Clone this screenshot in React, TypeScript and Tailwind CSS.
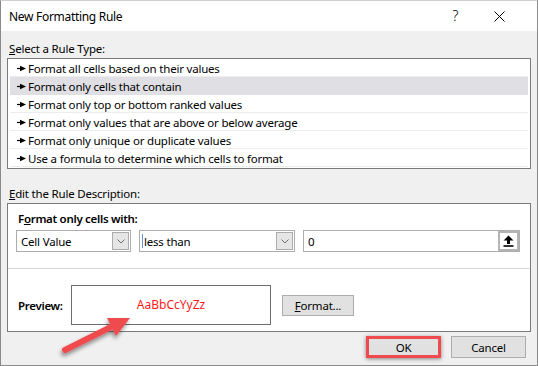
import React from "react";

const rules = [
  "Format all cells based on their values",
  "Format only cells that contain",
  "Format only top or bottom ranked values",
  "Format only values that are above or below average",
  "Format only unique or duplicate values",
  "Use a formula to determine which cells to format",
];

function Bullet() {
  return (
    <svg width="9" height="7" viewBox="0 0 9 7" className="shrink-0">
      <line x1="0" y1="3.5" x2="4" y2="3.5" stroke="#000" strokeWidth="1.2" />
      <polygon points="3,0.8 9,3.5 3,6.2" fill="#000" />
    </svg>
  );
}

function Chevron() {
  return (
    <svg width="8" height="5" viewBox="0 0 8 5">
      <polyline points="0.5,0.5 4,4 7.5,0.5" fill="none" stroke="#6d6d6d" strokeWidth="1" />
    </svg>
  );
}

function Combo({ value, width }: { value: string; width: string }) {
  return (
    <div className={`${width} h-[22px] border border-[#adadad] bg-white flex items-center p-[1px]`}>
      <span className="flex-1 pl-[3px] pt-[1px] truncate">{value}</span>
      <div className="w-[17px] h-[18px] border border-[#acacac] bg-[#e5e5e5] flex items-center justify-center">
        <Chevron />
      </div>
    </div>
  );
}

export default function App() {
  return (
    <div
      className="w-[538px] h-[366px] bg-[#f0f0f0] border-x border-b border-[#8a8a8a] border-t border-t-[#d0d0d0] flex flex-col text-[11.5px] tracking-[-0.2px] leading-[16px] text-black relative overflow-hidden"
      style={{ fontFamily: '"Segoe UI", "Noto Sans", sans-serif' }}
    >
      {/* Title bar */}
      <div className="h-[30px] bg-white flex items-center pl-[8px] pr-[15px] shrink-0">
        <span className="flex-1 text-[12px] tracking-[-0.3px] pt-[1px]">New Formatting Rule</span>
        <span className="w-[46px] pl-[5px] text-center text-[14px] font-light tracking-normal">?</span>
        <div className="w-[46px] flex items-center justify-center">
          <svg width="11" height="11" viewBox="0 0 11 11">
            <path d="M0.5 0.5 L10.5 10.5 M10.5 0.5 L0.5 10.5" stroke="#000" strokeWidth="1" />
          </svg>
        </div>
      </div>

      <div className="px-[6px] flex flex-col">
        {/* Rule type */}
        <div className="mt-[10px] pl-[2px] h-[16px]">
          <span className="underline">S</span>elect a Rule Type:
        </div>
        <div className="mt-[1px] h-[111px] border border-[#7a7a7a] bg-white px-[2px] pb-[1px]">
          {rules.map((r, i) => (
            <div
              key={r}
              className={`h-[18px] flex items-center gap-[2px] pl-[7px] pt-[2px] border-b ${
                i === 1 ? "bg-[#dfdfe4] border-[#dfdfe4]" : "border-[#ededed]"
              }`}
            >
              <Bullet />
              <span className="whitespace-nowrap">{r}</span>
            </div>
          ))}
        </div>

        {/* Description */}
        <div className="mt-[17px] pl-[2px] h-[16px]">
          <span className="underline">E</span>dit the Rule Description:
        </div>
        <div className="mt-[1px] border border-[#7a7a7a] bg-white flex flex-col">
          <div className="h-[65px] border-b border-[#d8d8d8] pl-[8px] pr-[10px] pt-[7px] flex flex-col gap-[3px]">
            <div className="font-semibold pl-[2px] tracking-[-0.3px]">
              F<span className="underline">o</span>rmat only cells with:
            </div>
            <div className="flex gap-[8px]">
              <Combo value="Cell Value" width="w-[115px]" />
              <div className="relative">
                <Combo value="less than" width="w-[156px]" />
                <div className="absolute left-[3px] top-[4px] w-[1px] h-[14px] bg-[#6b8fd6]" />
              </div>
              <div className="flex-1 h-[22px] border border-[#adadad] bg-white flex items-center">
                <span className="flex-1 pl-[4px] pt-[1px]">0</span>
                <div className="w-[21px] h-[20px] border-2 border-[#b4b4b4] bg-white flex items-center justify-center">
                  <svg width="11" height="12" viewBox="0 0 11 12">
                    <path d="M5.5 0.5 L10.5 5.5 L7 5.5 L7 9 L4 9 L4 5.5 L0.5 5.5 Z" fill="#000" />
                    <rect x="0.5" y="10.2" width="10" height="1.6" fill="#000" />
                  </svg>
                </div>
              </div>
            </div>
          </div>
          <div className="h-[62px] pl-[9px] pt-[16px] flex items-start">
            <div className="h-[40px] flex items-center">
              <span className="font-semibold w-[54px] pl-[1px] tracking-[-0.3px] pt-[1px]">Preview:</span>
              <div className="w-[200px] h-[40px] border border-[#6e6e6e] flex items-center justify-center text-[#ff1a1a] text-[12px] tracking-normal">
                AaBbCcYyZz
              </div>
              <div className="ml-[11px] w-[72px] h-[21px] border border-[#adadad] bg-[#e1e1e1] flex items-center justify-center">
                <span className="pt-[1px]">
                  <span className="underline">F</span>ormat...
                </span>
              </div>
            </div>
          </div>
        </div>

        {/* Buttons */}
        <div className="mt-[4px] flex justify-end gap-[10px] pr-[5px]">
          <div className="relative w-[75px] h-[22px] border border-[#adadad] bg-[#e1e1e1] flex items-center justify-center pt-[1px]">
            OK
            <div className="absolute -inset-[1px] border-[3px] border-[#ef4b4f] shadow-[0_1px_4px_rgba(0,0,0,0.45)]" />
          </div>
          <div className="w-[75px] h-[22px] border border-[#adadad] bg-[#e1e1e1] flex items-center justify-center pt-[1px]">
            Cancel
          </div>
        </div>
      </div>

      {/* annotation arrow */}
      <svg className="absolute left-0 top-0 pointer-events-none" width="538" height="366">
        <defs>
          <filter id="sh" x="-50%" y="-50%" width="200%" height="200%">
            <feDropShadow dx="-1" dy="3" stdDeviation="2" floodColor="#000" floodOpacity="0.45" />
          </filter>
        </defs>
        <g filter="url(#sh)">
          <line x1="64" y1="349" x2="112" y2="325" stroke="#ef4b4f" strokeWidth="6" strokeLinecap="round" />
          <polygon points="129,317 115,335 106,317" fill="#ef4b4f" />
        </g>
      </svg>
    </div>
  );
}
